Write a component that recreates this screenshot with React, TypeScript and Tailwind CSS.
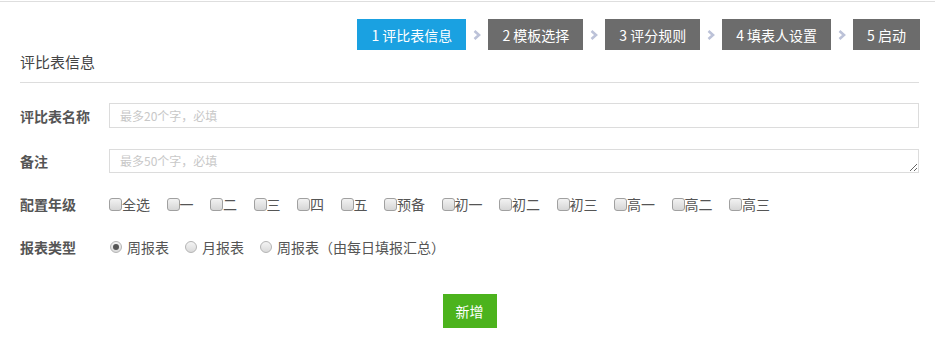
import React from "react";

const steps = ["1 评比表信息", "2 模板选择", "3 评分规则", "4 填表人设置", "5 启动"];
const grades = ["全选", "一", "二", "三", "四", "五", "预备", "初一", "初二", "初三", "高一", "高二", "高三"];
const types = ["周报表", "月报表", "周报表（由每日填报汇总）"];

function Chevron() {
  return (
    <svg width="8" height="10" viewBox="0 0 8 10" className="mx-[7px] shrink-0">
      <path d="M1.5 1 L6 5 L1.5 9" fill="none" stroke="#bcc2d8" strokeWidth="2.6" />
    </svg>
  );
}

export default function App() {
  return (
    <div
      className="w-[935px] h-[349px] bg-white text-[#555] overflow-hidden"
      style={{ fontFamily: '"Noto Sans CJK SC", "Noto Sans", sans-serif' }}
    >
      <div className="pt-px">
        <div className="h-px bg-[#dedede]" />
      </div>
      <div className="flex justify-end items-center pr-[15px] mt-[17px]">
        {steps.map((s, i) => (
          <React.Fragment key={s}>
            {i > 0 && <Chevron />}
            <div
              className={
                "h-[31px] px-[14px] flex items-center justify-center text-[14px] leading-none text-white whitespace-nowrap " +
                (i === 0 ? "bg-[#1aa1e1]" : "bg-[#6c6c6c]")
              }
            >
              {s}
            </div>
          </React.Fragment>
        ))}
      </div>
      <div className="pl-5 pr-4">
        <div className="mt-[2px] h-[31px] leading-[20px] text-[15px] text-[#444] border-b border-[#ddd]">
          评比表信息
        </div>
        <div className="flex items-center mt-5">
          <div className="w-[89px] text-[14px] font-bold leading-5">评比表名称</div>
          <input
            className="flex-1 h-[25px] border border-[#dcdcdc] pl-[10px] text-[12px] outline-none placeholder:text-[#c8c8c8]"
            placeholder="最多20个字，必填"
          />
        </div>
        <div className="flex items-center mt-[21px]">
          <div className="w-[89px] text-[14px] font-bold leading-5">备注</div>
          <textarea
            className="flex-1 h-[24px] border border-[#dcdcdc] pl-[10px] pt-[2px] text-[12px] leading-[18px] outline-none placeholder:text-[#c8c8c8] block"
            placeholder="最多50个字，必填"
          />
        </div>
        <div className="flex items-center mt-[21px] h-5">
          <div className="w-[89px] text-[14px] font-bold leading-5">配置年级</div>
          <div className="flex items-center">
            {grades.map((g) => (
              <label key={g} className="flex items-center mr-[16.5px] text-[14px] leading-5">
                <span className="w-[13px] h-[13px] rounded-[3px] border border-[#a0a0a0] bg-gradient-to-b from-[#f2f2f2] to-[#d6d6d6]" />
                {g}
              </label>
            ))}
          </div>
        </div>
        <div className="flex items-center mt-[23px] h-5">
          <div className="w-[89px] text-[14px] font-bold leading-5">报表类型</div>
          <div className="flex items-center pl-px">
            {types.map((t, i) => (
              <label key={t} className="flex items-center mr-4 text-[14px] leading-5">
                <span className="w-[12px] h-[12px] rounded-full border border-[#b4b4b4] bg-gradient-to-b from-[#f4f4f4] to-[#dadada] mr-[5px] flex items-center justify-center">
                  {i === 0 && <span className="w-[6px] h-[6px] rounded-full bg-[#555]" />}
                </span>
                {t}
              </label>
            ))}
          </div>
        </div>
        <div className="flex justify-center mt-[37px]">
          <button className="w-[54px] h-[34px] bg-[#4cb31d] text-white text-[14px] leading-none">新增</button>
        </div>
      </div>
    </div>
  );
}
